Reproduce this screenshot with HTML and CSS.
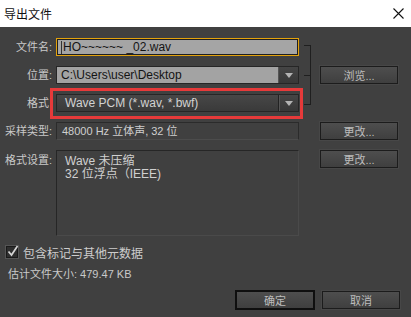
FILE: index.html
```html
<!DOCTYPE html>
<html lang="zh-CN">
<head>
  <meta charset="UTF-8">
  <title>导出文件</title>
  <link rel="stylesheet" href="styles.css">
</head>
<body>
  <!-- Title bar -->
  <div class="titlebar">
    <span class="title">导出文件</span>
    <svg class="close" width="11" height="11" viewBox="0 0 11 11">
      <path d="M0.5 0.5 L10.5 10.5 M10.5 0.5 L0.5 10.5" stroke="#111" stroke-width="1.1" fill="none"/>
    </svg>
  </div>

  <div class="dialog">
    <div class="form">
      <div class="bracket"></div>

      <label class="lbl">文件名:</label>
      <div class="field light focus"><span class="caret"></span>HO~~~~~~ _02.wav</div>

      <label class="lbl">位置:</label>
      <div class="combo light">
        <span class="value">C:\Users\user\Desktop</span>
        <span class="arrow-btn"><i class="arrow"></i></span>
      </div>
      <button class="btn side">浏览...</button>

      <label class="lbl fmt">格式</label>
      <div class="combo dark marked">
        <span class="value">Wave PCM (*.wav, *.bwf)</span>
        <span class="arrow-btn sep"><i class="arrow"></i></span>
      </div>

      <label class="lbl">采样类型:</label>
      <div class="field dark">48000 Hz 立体声, 32 位</div>
      <button class="btn side">更改...</button>

      <label class="lbl top">格式设置:</label>
      <div class="box">Wave 未压缩<br>32 位浮点（IEEE)</div>
      <button class="btn side top">更改...</button>
    </div>

    <label class="check">
      <span class="checkbox">
        <svg width="14" height="14" viewBox="0 0 14 14">
          <path d="M2.5 7.5 L5.5 11 L11.5 2" stroke="#d4d4d4" stroke-width="1.7" fill="none"/>
        </svg>
      </span>
      包含标记与其他元数据
    </label>

    <div class="estimate">估计文件大小: 479.47 KB</div>

    <div class="actions">
      <button class="btn default">确定</button>
      <button class="btn">取消</button>
    </div>
  </div>
</body>
</html>
```

FILE: styles.css
```css
body { margin: 0; font-family: "Liberation Sans", "Noto Sans CJK SC", sans-serif; font-size: 11px; background: #404040; }

/* Title bar */
.titlebar { height: 27px; background: #fff; display: flex; align-items: center; justify-content: space-between; padding: 0 7px 0 4px; }
.title { font-size: 12px; color: #111; }
.close { display: block; }

.dialog { background: #404040; color: #c9c9c9; padding-top: 11px; height: 290px; box-sizing: border-box; }

/* Main form grid */
.form {
  display: grid;
  grid-template-columns: 56px 243px 21px 78px;
  grid-template-rows: 18px 18px 18px 18px 86px;
  row-gap: 10px;
}
.lbl { grid-column: 1; text-align: right; padding-right: 4px; line-height: 18px; color: #c9c9c9; white-space: nowrap; }
.lbl.fmt { padding-right: 7px; }
.lbl.top { line-height: 14px; padding-top: 3px; }
.field, .combo, .box { grid-column: 2; }
.side { grid-column: 4; }

.field { box-sizing: border-box; height: 18px; line-height: 16px; padding: 0 5px; white-space: nowrap; display: flex; align-items: center; }
.field.light { background: #a5a5a5; color: #141414; border: 1px solid #2a2a2a; }
.field.focus { border-color: #e3a20c; box-shadow: inset 0 0 0 1px #1f1f1f; font-size: 12px; padding-left: 4px; }
.caret { display: inline-block; width: 1px; height: 13px; background: #333; margin-right: 1px; }
.field.dark { background: #404040; border: 1px solid #2b2b2b; border-bottom-color: #4c4c4c; color: #cfcfcf; }

/* Combo boxes */
.combo { position: relative; box-sizing: border-box; height: 18px; display: flex; border: 1px solid #262626; }
.combo .value { flex: 1; line-height: 16px; padding-left: 4px; white-space: nowrap; }
.combo.light .value { background: #a3a3a3; color: #141414; border-right: 1px solid #555; font-size: 12px; }
.combo.dark { background: linear-gradient(#474747, #3a3a3a); }
.combo.dark .value { color: #d2d2d2; padding-left: 8px; font-size: 12px; }
.arrow-btn { width: 19px; background: linear-gradient(#454545, #383838); display: flex; align-items: center; justify-content: center; }
.arrow-btn.sep { border-left: 1px solid #222; box-shadow: inset 1px 0 0 #555; }
.arrow { width: 0; height: 0; border-left: 4px solid transparent; border-right: 4px solid transparent; border-top: 5px solid #b4b4b4; }

/* Red highlight round the format picker */
.combo.marked::after {
  content: "";
  position: absolute;
  left: -7px; right: -5px; top: -7px; bottom: -8px;
  border: 3px solid #e63a3a;
}

/* Bracket joining name, location and format */
.bracket {
  grid-column: 3;
  grid-row: 1 / 4;
  margin: 7px 0 7px 5px;
  width: 6px;
  border: 1px solid #1f1f1f;
  border-left: none;
  position: relative;
}
.bracket::after { content: ""; position: absolute; left: 0; right: 0; top: 50%; border-top: 1px solid #1f1f1f; }

.box { background: #404040; border: 1px solid #262626; border-right-color: #4a4a4a; border-bottom-color: #4a4a4a; padding: 4px 8px; line-height: 13px; color: #d0d0d0; font-size: 12px; }

/* Buttons */
.btn {
  box-sizing: border-box;
  width: 78px;
  height: 18px;
  padding: 0;
  font: inherit;
  color: #bdbdbd;
  background: linear-gradient(#4e4e4e, #3f3f3f);
  border: 1px solid #1c1c1c;
  box-shadow: 0 0 0 1px #474747;
}
.btn.top { align-self: start; }
.btn.default { width: 80px; height: 20px; border: 2px solid #0f0f0f; box-shadow: none; }

/* Checkbox + summary */
.check { display: flex; align-items: center; margin: 10px 0 0 6px; height: 12px; color: #cdcdcd; font-size: 12px; }
.checkbox { position: relative; width: 12px; height: 12px; background: #2e2e2e; box-sizing: border-box; border: 1px solid #1a1a1a; box-shadow: 0 0 0 1px #555; margin-right: 5px; }
.checkbox svg { position: absolute; left: -1px; top: -3px; }
.estimate { margin: 9px 0 0 8px; line-height: 14px; color: #c9c9c9; }

.actions { display: flex; justify-content: flex-end; align-items: center; gap: 7px; padding-right: 11px; margin-top: 9px; }
```
